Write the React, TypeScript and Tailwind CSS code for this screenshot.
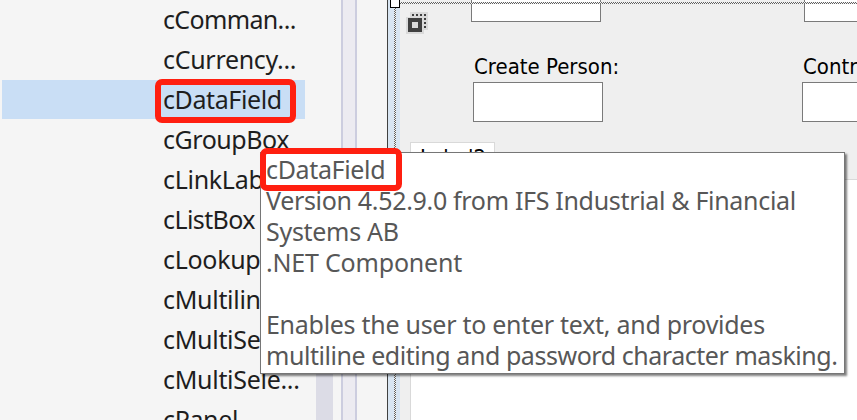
const ITEMS: [string, string][] = [
  ["cComman...", "tracking-[-0.65px]"],
  ["cCurrency...", "tracking-[-0.3px]"],
  ["cDataField", "tracking-[-0.4px]"],
  ["cGroupBox", "tracking-[-0.45px]"],
  ["cLinkLabel", "tracking-[-0.3px]"],
  ["cListBox", "tracking-[-0.6px]"],
  ["cLookup", "tracking-[-0.3px]"],
  ["cMultiline...", "tracking-[-0.3px]"],
  ["cMultiSele...", "tracking-[-0.3px]"],
  ["cMultiSele...", "tracking-[-0.3px]"],
  ["cPanel", "tracking-[-0.35px]"],
];

const TIP: [string, string][] = [
  ["cDataField", "tracking-[-0.35px]"],
  ["Version 4.52.9.0 from IFS Industrial & Financial", "tracking-[-0.32px]"],
  ["Systems AB", "tracking-[-0.3px]"],
  [".NET Component", "tracking-[-0.2px]"],
  ["", ""],
  ["Enables the user to enter text, and provides", "tracking-[-0.28px]"],
  ["multiline editing and password character masking.", "tracking-[-0.45px]"],
];

const CHECKER =
  "bg-[repeating-conic-gradient(#606060_0_25%,#f4f4f4_0_50%)] bg-[length:2px_2px]";

function Toolbox() {
  return (
    <div className="relative h-full w-[341px] shrink-0 bg-[#f5f5f5]">
      <ul className="w-[305px] pl-[2px]">
        {ITEMS.map(([name, tracking], i) => (
          <li
            key={i}
            className={`h-10 pl-[161px] text-[25px] leading-[38px] whitespace-nowrap text-[#1e1e1e] ${tracking} ${
              i === 2 ? "bg-[linear-gradient(#c9def5_39px,transparent_39px)]" : ""
            }`}
          >
            <span>{name}</span>
          </li>
        ))}
      </ul>
      <div className="absolute top-[300px] left-[316px] h-[120px] w-[17px] bg-[#dcdce6]" />
    </div>
  );
}

function Field({ label, left }: { label: string; left: string }) {
  return (
    <div className={`w-[130px] shrink-0 ${left}`}>
      <div className="ml-[1px] h-[29px] text-[22px] leading-[27px] whitespace-nowrap text-black [font-family:'DejaVu_Sans_Condensed','DejaVu_Sans',sans-serif] [font-stretch:condensed]">
        <span>{label}</span>
      </div>
      <div className="h-10 border border-[#7a7a7a] bg-white" />
    </div>
  );
}

function Designer() {
  return (
    <div className="relative h-full w-[457px] shrink-0 overflow-hidden bg-[#efefef]">
      <div className="flex h-[22px]">
        <div className="ml-[71px] w-[130px] shrink-0 border border-t-0 border-[#7a7a7a] bg-white" />
        <div className="ml-[203px] w-[130px] shrink-0 border border-t-0 border-[#7a7a7a] bg-white" />
      </div>
      <div className={`absolute top-[2px] left-0 h-[2px] w-full ${CHECKER}`} />
      <svg className="absolute top-[12px] left-[6px]" width="22" height="22" shapeRendering="crispEdges">
        <path d="M4 0h18v18h-4v4H0V5h4z" fill="#dadada" />
        <path d="M2 6h14v14H2zM6 2h2v2H6zM10 2h2v2h-2zM14 2h2v2h-2zM18 2h2v2h-2zM18 6h2v2h-2zM18 10h2v2h-2zM18 14h2v2h-2z" fill="#404040" />
        <path d="M6 10h6v6H6z" fill="#dadada" />
      </svg>
      <div className="mt-[31px] flex">
        <Field label="Create Person:" left="ml-[73px]" />
        <Field label="Contract:" left="ml-[199px]" />
      </div>
      <div className="mt-[20px] ml-[10px] h-[37px] w-[85px] border border-b-0 border-[#d9d9d9] bg-white pt-[2px] pl-[9px] text-[22px] leading-[26px] text-black [font-family:'DejaVu_Sans_Condensed','DejaVu_Sans',sans-serif]">
        <span>Label2</span>
      </div>
      <div className="ml-[10px] h-[250px] border-t border-l border-[#d9d9d9] bg-white" />
    </div>
  );
}

export default function App() {
  return (
    <div className="relative flex h-[420px] w-[857px] overflow-hidden bg-[#f5f5f5] [font-family:'Noto_Sans',sans-serif]">
      <Toolbox />
      <div className="w-[16px] shrink-0 border-x-2 border-[#cccddf] bg-[#ecebf1]" />
      <div className="w-[30px] shrink-0 bg-[#f5f5f5]" />
      <div className="w-px shrink-0 bg-[#404040]" />
      <div className="flex w-[12px] shrink-0 bg-[#d8e5f2]">
        <div className={`ml-[6px] w-[2px] ${CHECKER}`} />
      </div>
      <Designer />
      <div className="absolute -top-[2px] left-[390px] h-[10px] w-[10px] border border-black bg-white" />

      <div className="absolute top-[152px] left-[260px] h-[222px] w-[585px] border border-[#767676] bg-white pt-[1px] pl-[5px] text-[25px] leading-[31px] whitespace-nowrap text-[#575757] shadow-[2px_2px_2px_rgba(0,0,0,0.5)]">
        {TIP.map(([line, tracking], i) => (
          <div key={i} className={`h-[31px] ${tracking}`}>
            <span>{line}</span>
          </div>
        ))}
      </div>

      <div className="absolute top-[79px] left-[155px] h-[44px] w-[141px] rounded-[7px] border-[6px] border-[#ff1f10]" />
      <div className="absolute top-[148px] left-[260px] h-[43px] w-[142px] rounded-[7px] border-[6px] border-[#ff1f10]" />
    </div>
  );
}
